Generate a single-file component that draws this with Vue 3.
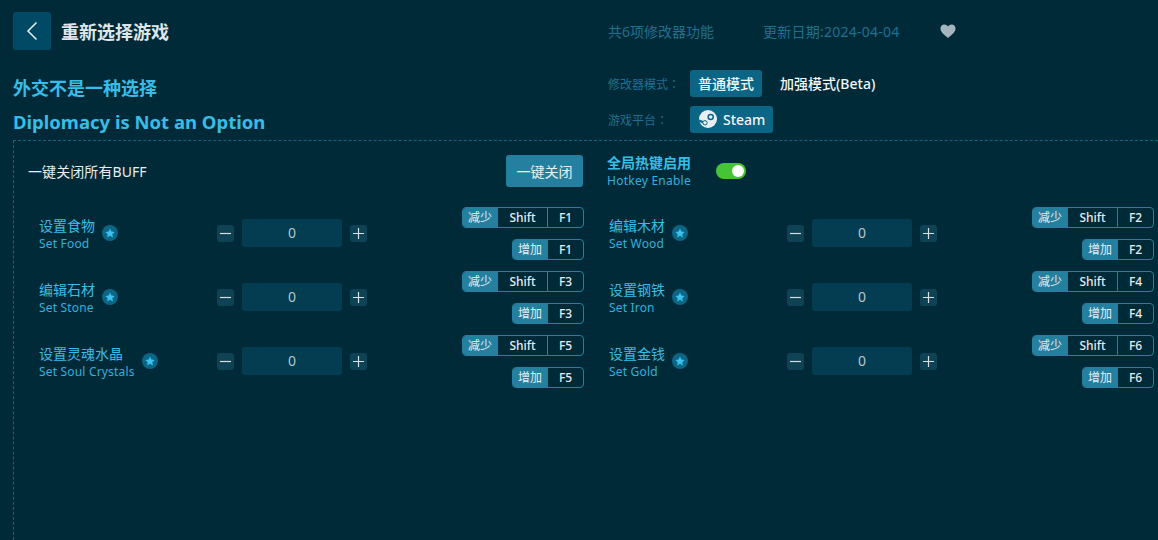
<script setup>
const items = [
  { cn: '设置食物', en: 'Set Food', k1: 'F1' },
  { cn: '编辑木材', en: 'Set Wood', k1: 'F2' },
  { cn: '编辑石材', en: 'Set Stone', k1: 'F3' },
  { cn: '设置钢铁', en: 'Set Iron', k1: 'F4' },
  { cn: '设置灵魂水晶', en: 'Set Soul Crystals', k1: 'F5' },
  { cn: '设置金钱', en: 'Set Gold', k1: 'F6' }
]
</script>

<template>
  <div class="page">
    <header class="top">
      <button class="back" aria-label="back">
        <svg width="14" height="20" viewBox="0 0 14 20"><path d="M11.5 1.5 3 10l8.5 8.5" fill="none" stroke="#dfe9ec" stroke-width="1.6"/></svg>
      </button>
      <div class="title">重新选择游戏</div>
      <div class="meta">
        <span class="count">共6项修改器功能</span>
        <span class="date">更新日期:2024-04-04</span>
        <svg class="heart" width="16" height="14" viewBox="0 0 16 14"><path d="M8 14C3 10 .5 7.600.5 4.500.5 2 2.300.500 4.300.500 5.800.500 7.200 1.300 8 2.600 8.800 1.300 10.200.500 11.700.500 13.700.500 15.500 2 15.500 4.500 15.500 7.600 13 10 8 14Z" fill="#a5b5bd"/></svg>
      </div>
    </header>

    <section class="game">
      <div class="names">
        <div class="cn-name">外交不是一种选择</div>
        <div class="en-name">Diplomacy is Not an Option</div>
      </div>
      <div class="opts">
        <div class="opt-row">
          <span class="opt-label">修改器模式：</span>
          <span class="chip">普通模式</span>
          <span class="beta">加强模式(Beta)</span>
        </div>
        <div class="opt-row">
          <span class="opt-label">游戏平台：</span>
          <span class="chip steam">
            <svg width="18" height="18" viewBox="0 0 18 18">
              <circle cx="9" cy="9" r="9" fill="#e8eef1"/>
              <circle cx="11.700" cy="7" r="3.300" fill="#0b6685"/>
              <circle cx="11.700" cy="7" r="1.800" fill="#e8eef1"/>
              <path d="M0 10.500 6 13" stroke="#0b6685" stroke-width="2.400" fill="none"/>
              <circle cx="6" cy="12.800" r="2.200" fill="#e8eef1" stroke="#0b6685" stroke-width="1"/>
            </svg>
            Steam
          </span>
        </div>
      </div>
    </section>

    <main class="panel">
      <div class="panel-head">
        <div class="all-off">
          <span class="all-label">一键关闭所有BUFF</span>
          <button class="off-btn">一键关闭</button>
        </div>
        <div class="hotkey">
          <div class="hk-text">
            <div class="hk-cn">全局热键启用</div>
            <div class="hk-en">Hotkey Enable</div>
          </div>
          <span class="switch"><i></i></span>
        </div>
      </div>

      <div class="grid">
        <div v-for="it in items" :key="it.en" class="item">
          <div class="name-col">
            <div class="name-text">
              <div class="n-cn">{{ it.cn }}</div>
              <div class="n-en">{{ it.en }}</div>
            </div>
            <span class="star">
              <svg width="10" height="10" viewBox="0 0 24 24"><path d="M12 1l3.400 7.300 7.900 1-5.800 5.500 1.500 7.900L12 18.800 5 22.700l1.500-7.900L.7 9.300l7.900-1z" fill="#3cc0ec"/></svg>
            </span>
          </div>
          <div class="stepper">
            <span class="sq">
              <svg width="11" height="11" viewBox="0 0 11 11"><path d="M0 5.500h11" stroke="#d5e0e4" stroke-width="1.200"/></svg>
            </span>
            <span class="val">0</span>
            <span class="sq">
              <svg width="11" height="11" viewBox="0 0 11 11"><path d="M0 5.500h11M5.500 0v11" stroke="#d5e0e4" stroke-width="1.200"/></svg>
            </span>
          </div>
          <div class="keys">
            <div class="key-line">
              <span class="k-tag">减少</span><span class="k k-shift">Shift</span><span class="k k-f">{{ it.k1 }}</span>
            </div>
            <div class="key-line">
              <span class="k-tag">增加</span><span class="k k-f">{{ it.k1 }}</span>
            </div>
          </div>
        </div>
      </div>
    </main>
  </div>
</template>

<style scoped>
.page {
  width: 1158px;
  height: 540px;
  overflow: hidden;
  background: #012a38;
  font-family: "Noto Sans", "Noto Sans CJK SC", sans-serif;
  color: #fff;
  box-sizing: border-box;
}
.top {
  display: flex;
  align-items: center;
  height: 38px;
  padding: 12px 0 0 13px;
}
.back {
  width: 38px;
  height: 38px;
  padding: 0;
  border: 0;
  border-radius: 3px;
  background: #014a65;
  display: flex;
  align-items: center;
  justify-content: center;
}
.title {
  margin-left: 10px;
  font-size: 18px;
  font-weight: 700;
  color: #dfe6e9;
}
.meta {
  margin-left: auto;
  width: 550px;
  display: flex;
  align-items: center;
  font-size: 14px;
  color: #20708f;
}
.count { width: 155px; }
.date { width: 177px; letter-spacing: .25px; }
.heart { display: block; }
.game {
  display: flex;
  justify-content: space-between;
  height: 90px;
  padding-left: 13px;
}
.names { padding-top: 25px; }
.cn-name, .en-name {
  font-weight: 700;
  color: #38bde8;
  line-height: 26px;
}
.cn-name { font-size: 18px; }
.en-name { margin-top: 8px; font-size: 18.5px; }
.opts {
  width: 550px;
  padding-top: 20px;
}
.opt-row {
  display: flex;
  align-items: center;
  height: 27px;
  margin-bottom: 9px;
}
.opt-label {
  width: 82px;
  font-family: "Noto Sans CJK TC", sans-serif;
  font-size: 12px;
  color: #20708f;
}
.chip {
  height: 26px;
  padding: 0 8px 1px;
  border-radius: 3px;
  background: #0b6685;
  font-size: 14px;
  font-weight: 500;
  color: #f2f6f7;
  display: flex;
  align-items: center;
}
.beta {
  margin-left: 18px;
  padding-bottom: 1px;
  font-size: 14px;
  font-weight: 500;
  color: #f2f6f7;
}
.steam { gap: 6px; padding: 0 8px 1px 9px; }
.panel {
  margin-left: 13px;
  width: 1160px;
  height: 410px;
  box-sizing: border-box;
  border: 1px dashed #14657f;
}
.panel-head {
  display: flex;
  align-items: center;
  height: 60px;
}
.all-off {
  width: 593px;
  padding: 0 24px 0 14px;
  box-sizing: border-box;
  display: flex;
  align-items: center;
  justify-content: space-between;
}
.all-label { font-size: 14px; color: #e8eef1; letter-spacing: .08px; }
.off-btn {
  width: 77px;
  height: 32px;
  padding: 0;
  border: 0;
  border-radius: 3px;
  background: #25809f;
  color: #e8f0f2;
  font-family: inherit;
  font-size: 14px;
}
.hotkey {
  display: flex;
  align-items: center;
}
.hk-text { width: 109px; margin-top: 2px; }
.hk-cn { font-size: 14px; font-weight: 700; color: #38bde8; line-height: 18px; }
.hk-en { font-size: 12px; color: #30b0dc; line-height: 18px; letter-spacing: .25px; }
.switch {
  width: 30px;
  height: 16px;
  border-radius: 8px;
  background: #45c435;
  position: relative;
}
.switch i {
  position: absolute;
  right: 2px;
  top: 2px;
  width: 12px;
  height: 12px;
  border-radius: 50%;
  background: #fff;
}
.grid {
  display: grid;
  grid-template-columns: 570px 570px;
  grid-auto-rows: 64px;
}
.item {
  display: flex;
  align-items: center;
  padding-left: 25px;
  width: 570px;
  box-sizing: border-box;
}
.name-col {
  width: 178px;
  display: flex;
  align-items: center;
  gap: 7px;
}
.name-text { margin-top: 4px; }
.n-cn { font-size: 14px; color: #38bde8; line-height: 18px; }
.n-en { font-size: 12px; color: #30b0dc; line-height: 18px; letter-spacing: .18px; }
.star {
  width: 16px;
  height: 16px;
  border-radius: 50%;
  background: #0b6685;
  display: flex;
  align-items: center;
  justify-content: center;
}
.stepper {
  display: flex;
  align-items: center;
  gap: 8px;
}
.sq {
  width: 17px;
  height: 17px;
  border-radius: 3px;
  background: #0d4355;
  display: flex;
  align-items: center;
  justify-content: center;
}
.val {
  width: 100px;
  height: 28px;
  border-radius: 3px;
  background: #043d52;
  color: #b5c6cd;
  font-size: 14px;
  text-align: center;
  line-height: 28px;
}
.keys {
  margin-left: auto;
  display: flex;
  flex-direction: column;
  align-items: flex-end;
  gap: 11px;
}
.key-line {
  display: flex;
  height: 21px;
  box-sizing: border-box;
  border: 1px solid #25809f;
  border-radius: 4px;
  font-size: 12px;
  line-height: 19px;
  color: #e4ecef;
  overflow: hidden;
}
.k-tag {
  width: 36px;
  margin: -1px 0 -1px -1px;
  background: #25809f;
  text-align: center;
  line-height: 21px;
}
.k { text-align: center; font-weight: 500; }
.k-shift { width: 49px; border-right: 1px solid #25809f; }
.k-f { width: 35px; }
</style>
